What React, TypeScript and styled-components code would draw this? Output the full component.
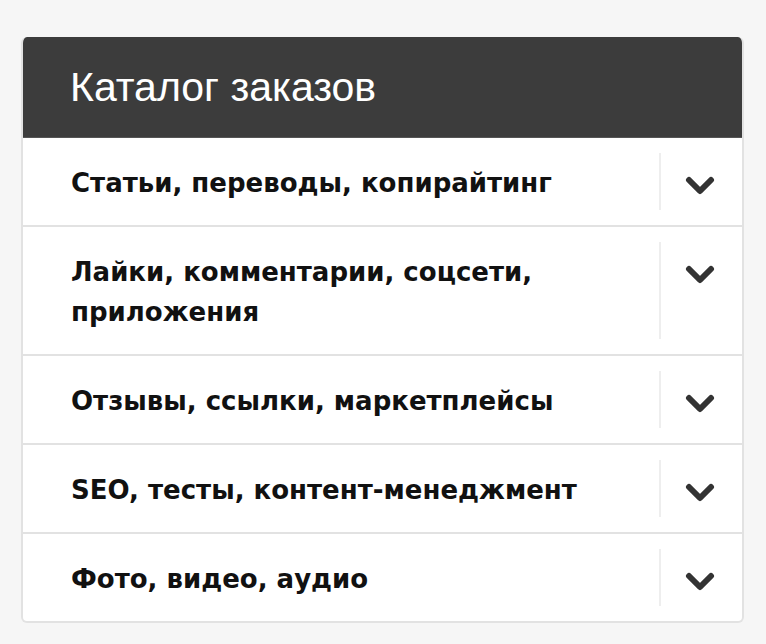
import React from "react";
import styled, { createGlobalStyle } from "styled-components";

const GlobalStyle = createGlobalStyle`
  html, body {
    margin: 0;
    padding: 0;
    background: #f6f6f6;
  }
`;

const Page = styled.div`
  padding: 37px 22px 20px 21px;
`;

const Card = styled.div`
  width: 723px;
  border-radius: 6px;
  overflow: hidden;
  background: #fff;
  border: 2px solid #e2e2e2;
  border-top: none;
  box-sizing: border-box;
`;

const Header = styled.div`
  height: 100px;
  background: #3c3c3c;
  display: flex;
  align-items: center;
  padding-left: 47px;
  border-bottom: 1px solid #555;
`;

const Title = styled.h2`
  margin: 0;
  font-family: "Liberation Sans", Arial, sans-serif;
  font-weight: 400;
  font-size: 41px;
  color: #fff;
`;

const Row = styled.div`
  display: flex;
  border-bottom: 2px solid #e2e2e2;

  &:last-child {
    border-bottom: none;
  }
`;

const Label = styled.div`
  flex: 1;
  padding: 25px 20px 22px 48px;
  font-family: "DejaVu Sans", sans-serif;
  font-weight: 700;
  font-size: 26px;
  line-height: 40px;
  color: #111;
`;

const Toggle = styled.div`
  width: 78px;
  margin: 15px 0;
  border-left: 2px solid #eeeeee;
  display: flex;
  justify-content: center;
  align-items: flex-start;
  padding: 23px 3px 0 0;
`;

const Chevron = () => (
  <svg width="30" height="19" viewBox="0 0 30 19">
    <polyline
      points="4,4 15,15 26,4"
      fill="none"
      stroke="#333"
      strokeWidth="6"
      strokeLinecap="round"
      strokeLinejoin="round"
    />
  </svg>
);

const items = [
  "Статьи, переводы, копирайтинг",
  "Лайки, комментарии, соцсети, приложения",
  "Отзывы, ссылки, маркетплейсы",
  "SEO, тесты, контент-менеджмент",
  "Фото, видео, аудио",
];

export default function App() {
  return (
    <Page>
      <GlobalStyle />
      <Card>
        <Header>
          <Title>Каталог заказов</Title>
        </Header>
        {items.map((item) => (
          <Row key={item}>
            <Label>{item}</Label>
            <Toggle>
              <Chevron />
            </Toggle>
          </Row>
        ))}
      </Card>
    </Page>
  );
}
